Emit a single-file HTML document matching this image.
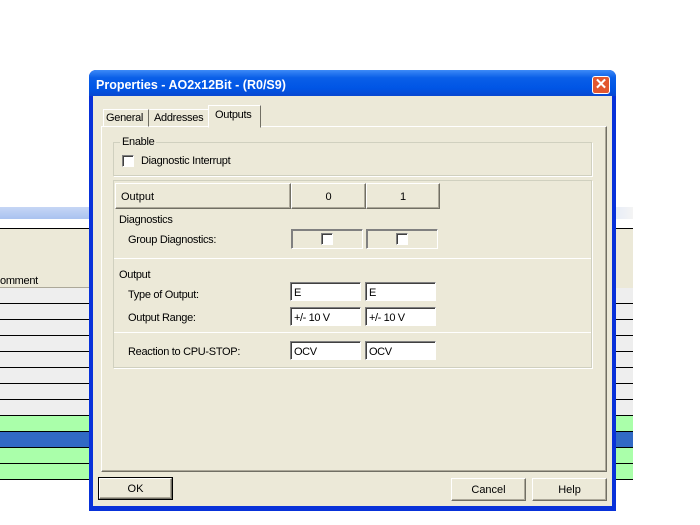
<!DOCTYPE html>
<html><head><style>
*{margin:0;padding:0;box-sizing:border-box}
body{width:700px;height:525px;background:#fff;position:relative;overflow:hidden;font-family:"Liberation Sans",sans-serif;font-size:11px;color:#000}
.a{position:absolute}
.t{position:absolute;white-space:nowrap;font-size:11px;letter-spacing:-0.3px}
.row{position:absolute;height:16px;border-bottom:1px solid #000}
.btn{position:absolute;background:#ece9d8;border:1px solid;border-color:#fff #716f64 #716f64 #fff;box-shadow:inset -1px -1px 0 #aca899;text-align:center;font-size:11px}
.fld{position:absolute;background:#fff;border:1px solid;border-color:#808080 #fff #fff #808080;box-shadow:inset 1px 1px 0 #404040;padding:4px 0 0 3px;font-size:11px;letter-spacing:-0.4px}
.grp{position:absolute;border:1px solid #d0d0bf;box-shadow:1px 1px 0 #fff}
.cb{position:absolute;width:12px;height:12px;background:#fff;border:1px solid;border-color:#808080 #fff #fff #808080;box-shadow:inset 1px 1px 0 #404040}
</style></head><body>
<div class="a" style="left:0;top:207px;width:92px;height:12px;background:linear-gradient(#c6d6f5,#a9c2f0)"></div>
<div class="a" style="left:0;top:219px;width:92px;height:9px;background:#fff"></div>
<div class="a" style="left:0;top:228px;width:92px;height:1px;background:#000"></div>
<div class="a" style="left:0;top:229px;width:92px;height:43px;background:#ece9d8"></div>
<div class="a" style="left:0;top:271px;width:92px;height:17px;background:#ece9d8;border-bottom:1px solid #aca899"></div>
<div class="t" style="left:0;top:275px">omment</div>
<div class="a" style="left:614px;top:207px;width:19px;height:12px;background:linear-gradient(90deg,#e6ecf8,#f4f4f4)"></div>
<div class="a" style="left:614px;top:228px;width:19px;height:1px;background:#000"></div>
<div class="a" style="left:614px;top:229px;width:19px;height:59px;background:#ece9d8"></div>
<div id="rows"></div>
<script>
var c=['#eeeeee','#eeeeee','#eeeeee','#eeeeee','#eeeeee','#eeeeee','#eeeeee','#eeeeee','#aaffaa','#316ac5','#aaffaa','#aaffaa'];
var h='';for(var i=0;i<c.length;i++){var y=288+i*16;h+='<div class="row" style="left:0;top:'+y+'px;width:92px;background:'+c[i]+'"></div><div class="row" style="left:614px;top:'+y+'px;width:19px;background:'+c[i]+'"></div>';}
document.getElementById('rows').innerHTML=h;
</script>
<div class="a" style="left:89px;top:70px;width:527px;height:441px;background:#0831d9;border-radius:7px 7px 0 0"></div>
<div class="a" style="left:89px;top:70px;width:527px;height:26px;background:linear-gradient(#3d8af7,#0a5fe8 30%,#0055e5 70%,#0848d0);border-radius:7px 7px 0 0"></div>
<div class="t" style="left:96px;top:78px;color:#fff;font-weight:bold;font-size:12.5px;letter-spacing:0">Properties - AO2x12Bit - (R0/S9)</div>
<div class="a" style="left:592px;top:76px;width:18px;height:18px;background:#e2572f;border:1px solid #fff;border-radius:3px;color:#fff;font-size:15px;line-height:15px;text-align:center;font-weight:bold">✕</div>
<div class="a" style="left:93px;top:96px;width:519px;height:410px;background:#ece9d8"></div>
<div class="a" style="left:101px;top:126px;width:506px;height:346px;border:1px solid;border-color:#fff #716f64 #716f64 #fff;box-shadow:inset -1px -1px 0 #aca899"></div>
<div class="a" style="left:103px;top:109px;width:46px;height:18px;border:1px solid;border-color:#fff #716f64 transparent #fff"></div>
<div class="t" style="left:106px;top:112px">General</div>
<div class="a" style="left:149px;top:109px;width:60px;height:18px;border:1px solid;border-color:#fff #716f64 transparent transparent"></div>
<div class="t" style="left:154px;top:112px">Addresses</div>
<div class="a" style="left:208px;top:105px;width:53px;height:23px;background:#ece9d8;border:1px solid;border-color:#fff #716f64 transparent #fff"></div>
<div class="t" style="left:215px;top:109px">Outputs</div>
<div class="grp" style="left:113px;top:142px;width:479px;height:34px"></div>
<div class="t" style="left:120px;top:136px;background:#ece9d8;padding:0 2px">Enable</div>
<div class="cb" style="left:122px;top:155px"></div>
<div class="t" style="left:141px;top:155px">Diagnostic Interrupt</div>
<div class="grp" style="left:113px;top:180px;width:479px;height:188px"></div>
<div class="a" style="left:114px;top:258px;width:477px;height:1px;background:#d0d0bf;border-bottom:1px solid #fff"></div>
<div class="a" style="left:114px;top:332px;width:477px;height:1px;background:#d0d0bf;border-bottom:1px solid #fff"></div>
<div class="btn" style="left:115px;top:183px;width:176px;height:26px;text-align:left;padding:7px 0 0 5px">Output</div>
<div class="btn" style="left:291px;top:183px;width:75px;height:26px;padding-top:7px">0</div>
<div class="btn" style="left:366px;top:183px;width:74px;height:26px;padding-top:7px">1</div>
<div class="t" style="left:119px;top:214px">Diagnostics</div>
<div class="t" style="left:128px;top:234px">Group Diagnostics:</div>
<div class="a" style="left:291px;top:229px;width:72px;height:20px;border:1px solid;border-color:#808080 #fff #fff #808080;box-shadow:1px 1px 0 #808080 inset"></div>
<div class="a" style="left:366px;top:229px;width:72px;height:20px;border:1px solid;border-color:#808080 #fff #fff #808080;box-shadow:1px 1px 0 #808080 inset"></div>
<div class="cb" style="left:321px;top:233px"></div>
<div class="cb" style="left:396px;top:233px"></div>
<div class="t" style="left:119px;top:269px">Output</div>
<div class="t" style="left:128px;top:289px">Type of Output:</div>
<div class="t" style="left:128px;top:312px">Output Range:</div>
<div class="t" style="left:128px;top:346px">Reaction to CPU-STOP:</div>
<div class="fld" style="left:290px;top:282px;width:71px;height:19px">E</div>
<div class="fld" style="left:365px;top:282px;width:71px;height:19px">E</div>
<div class="fld" style="left:290px;top:307px;width:71px;height:19px">+/- 10 V</div>
<div class="fld" style="left:365px;top:307px;width:71px;height:19px">+/- 10 V</div>
<div class="fld" style="left:290px;top:341px;width:71px;height:19px">OCV</div>
<div class="fld" style="left:365px;top:341px;width:71px;height:19px">OCV</div>
<div class="a" style="left:98px;top:477px;width:75px;height:23px;border:1px solid #000"></div>
<div class="btn" style="left:99px;top:478px;width:73px;height:21px;padding-top:4px">OK</div>
<div class="btn" style="left:451px;top:478px;width:75px;height:23px;padding-top:5px">Cancel</div>
<div class="btn" style="left:532px;top:478px;width:75px;height:23px;padding-top:5px">Help</div>
</body></html>
